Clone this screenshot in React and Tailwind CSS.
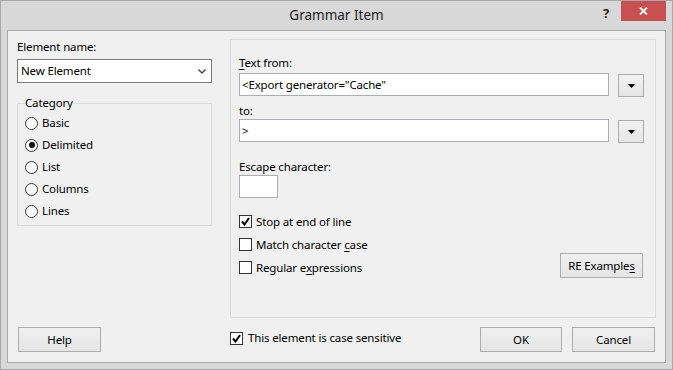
import React from 'react';

const font = { fontFamily: '"Noto Sans", "Segoe UI", sans-serif' };

const DropButton = () => (
  <div className="w-[26px] h-[23px] border border-[#acacac] bg-gradient-to-b from-[#f2f2f2] to-[#e5e5e5] flex items-center justify-center">
    <svg width="7" height="4" viewBox="0 0 7 4">
      <path d="M0 0H7L3.5 4Z" fill="#000" />
    </svg>
  </div>
);

const Button = ({ children, className = '' }) => (
  <div
    className={`h-[25px] border border-[#acacac] bg-gradient-to-b from-[#f0f0f0] to-[#e5e5e5] flex items-center justify-center text-black ${className}`}
  >
    {children}
  </div>
);

const Radio = ({ label, checked }) => (
  <div className="h-[22px] flex items-center">
    <div className="w-[13px] h-[13px] rounded-full border border-[#333] bg-white flex items-center justify-center">
      {checked && <div className="w-[6px] h-[6px] rounded-full bg-[#111]" />}
    </div>
    <span className="ml-[4px] leading-[16px]">{label}</span>
  </div>
);

const CheckBox = ({ checked }) => (
  <div className="w-[13px] h-[13px] border border-[#333] bg-white flex items-center justify-center shrink-0">
    {checked && (
      <svg width="9" height="9" viewBox="0 0 9 9">
        <path d="M1 4.5L3.5 7.5L8 1" stroke="#000" strokeWidth="2" fill="none" />
      </svg>
    )}
  </div>
);

const CheckRow = ({ checked, children }) => (
  <div className="h-[23px] flex items-center">
    <CheckBox checked={checked} />
    <span className="ml-[4px] leading-[16px]">{children}</span>
  </div>
);

export default function App() {
  return (
    <div
      style={font}
      className="w-[673px] h-[370px] bg-[#d8d8d8] border border-[#a9a9a9] flex flex-col text-black text-[11.5px] tracking-[-0.15px]"
    >
      {/* Title bar */}
      <div className="relative h-[29px] flex items-center justify-center">
        <span className="text-[13.5px] tracking-normal text-[#222] leading-[20px] mt-[-1px]">Grammar Item</span>
        <span className="absolute left-[602px] top-[4px] text-[13px] font-bold text-[#222] leading-[16px]">?</span>
        <div className="absolute left-[620px] top-0 w-[45px] h-[20px] bg-[#c75050] flex items-center justify-center">
          <svg width="9" height="8" viewBox="0 0 9 8">
            <path d="M1 0.5L8 7.5M8 0.5L1 7.5" stroke="#fff" strokeWidth="1.8" />
          </svg>
        </div>
      </div>

      {/* Client area */}
      <div className="mx-[6px] h-[333px] bg-[#f0f0f0] border border-[#aaaaaa] flex flex-col pt-[8px]">
        <div className="flex h-[279px]">
          {/* Left column */}
          <div className="w-[222px] pl-[9px] flex flex-col">
            <div className="leading-[16px]">Element name:</div>
            <div className="mt-[4px] w-[195px] h-[24px] border border-[#7a7a7a] bg-white flex items-center justify-between pl-[3px] pr-[5px]">
              <span className="leading-[16px]">New Element</span>
              <svg width="8" height="5" viewBox="0 0 8 5">
                <path d="M0.5 0.5L4 4L7.5 0.5" stroke="#444" strokeWidth="1.4" fill="none" />
              </svg>
            </div>
            <div className="relative mt-[20px] w-[195px] h-[123px] border border-[#dcdcdc] pl-[7px] pt-[8px]">
              <span className="absolute left-[7px] top-[-9px] bg-[#f0f0f0] pr-[1px] leading-[16px]">
                Category
              </span>
              <Radio label="Basic" />
              <Radio label="Delimited" checked />
              <Radio label="List" />
              <Radio label="Columns" />
              <Radio label="Lines" />
            </div>
          </div>

          {/* Right group */}
          <div className="w-[426px] h-[279px] border border-[#dcdcdc] pl-[8px] pr-[11px] pt-[15px] flex flex-col">
            <div className="leading-[16px]">
              <span className="underline underline-offset-2">T</span>ext from:
            </div>
            <div className="mt-[2px] flex gap-[9px]">
              <div className="w-[370px] h-[23px] border border-[#abadb3] bg-white flex items-center pl-[2px]">
                &lt;Export generator="Cache"
              </div>
              <div className="mt-[1px]">
                <DropButton />
              </div>
            </div>
            <div className="mt-[6px] leading-[16px]">to:</div>
            <div className="flex gap-[9px]">
              <div className="w-[370px] h-[23px] border border-[#abadb3] bg-white flex items-center pl-[2px]">
                &gt;
              </div>
              <div className="mt-[1px]">
                <DropButton />
              </div>
            </div>
            <div className="mt-[16px] leading-[16px]">Escape character:</div>
            <div className="w-[39px] h-[23px] border border-[#abadb3] bg-white" />
            <div className="mt-[12px] flex justify-between items-end">
              <div className="flex flex-col">
                <CheckRow checked>Stop at end of line</CheckRow>
                <CheckRow>
                  Match character <span className="underline underline-offset-2">c</span>ase
                </CheckRow>
                <CheckRow>
                  Regular e<span className="underline underline-offset-2">x</span>pressions
                </CheckRow>
              </div>
              <Button className="w-[83px] mb-[1px] mr-[1px]">
                <span>
                  RE Example<span className="underline underline-offset-2">s</span>
                </span>
              </Button>
            </div>
          </div>
        </div>

        {/* Bottom row */}
        <div className="mt-[9px] flex items-start">
          <div className="w-[222px] pl-[10px]">
            <Button className="w-[83px]">Help</Button>
          </div>
          <div className="flex-1 flex items-center mt-[3px]">
            <CheckBox checked />
            <span className="ml-[5px] leading-[16px]">This element is case sensitive</span>
          </div>
          <Button className="w-[82px] border-[#3399ff]">OK</Button>
          <Button className="w-[83px] ml-[10px] mr-[10px]">Cancel</Button>
        </div>
      </div>
    </div>
  );
}
